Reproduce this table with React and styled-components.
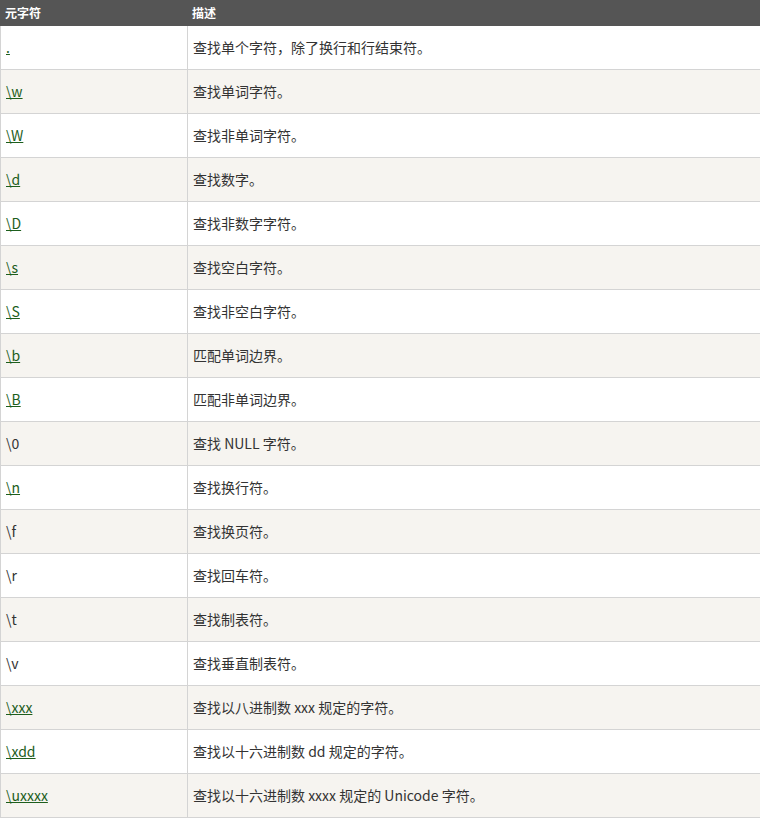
import React from "react";
import styled, { createGlobalStyle } from "styled-components";

const Global = createGlobalStyle`
  html, body { margin: 0; padding: 0; background: #fff; overflow: hidden; }
  body { font-family: "Noto Sans CJK SC", "Liberation Sans", sans-serif; }
`;

const Table = styled.table`
  border-collapse: collapse;
  table-layout: fixed;
  width: 762px;
  font-family: "Noto Sans CJK SC", "Liberation Sans", sans-serif;
  font-size: 14px;
  color: #333;
`;

const Th = styled.th`
  background: #555;
  color: #fff;
  font-size: 12px;
  font-weight: bold;
  text-align: left;
  vertical-align: top;
  padding: 3px 4px;
  line-height: 18px;
  border: 1px solid #555;
  height: 18px;
  box-sizing: content-box;
`;

const Row = styled.tr`
  background: ${(p) => (p.$alt ? "#f6f4f0" : "#fff")};
`;

const Td = styled.td`
  border: 1px solid #d4d4d4;
  padding: 7px 5px 8px;
  line-height: 28px;
  vertical-align: top;
`;

const Link = styled.a`
  color: #1d5e1d;
  text-decoration: underline;
`;

const rows = [
  [".", "查找单个字符，除了换行和行结束符。", true],
  ["\\w", "查找单词字符。", true],
  ["\\W", "查找非单词字符。", true],
  ["\\d", "查找数字。", true],
  ["\\D", "查找非数字字符。", true],
  ["\\s", "查找空白字符。", true],
  ["\\S", "查找非空白字符。", true],
  ["\\b", "匹配单词边界。", true],
  ["\\B", "匹配非单词边界。", true],
  ["\\0", "查找 NULL 字符。", false],
  ["\\n", "查找换行符。", true],
  ["\\f", "查找换页符。", false],
  ["\\r", "查找回车符。", false],
  ["\\t", "查找制表符。", false],
  ["\\v", "查找垂直制表符。", false],
  ["\\xxx", "查找以八进制数 xxx 规定的字符。", true],
  ["\\xdd", "查找以十六进制数 dd 规定的字符。", true],
  ["\\uxxxx", "查找以十六进制数 xxxx 规定的 Unicode 字符。", true],
];

export default function App() {
  return (
    <>
      <Global />
      <Table>
        <colgroup>
          <col style={{ width: 187 }} />
          <col />
        </colgroup>
        <thead>
          <tr>
            <Th>元字符</Th>
            <Th>描述</Th>
          </tr>
        </thead>
        <tbody>
          {rows.map(([m, d, link], i) => (
            <Row key={i} $alt={i % 2 === 1}>
              <Td>{link ? <Link href="#">{m}</Link> : m}</Td>
              <Td>{d}</Td>
            </Row>
          ))}
        </tbody>
      </Table>
    </>
  );
}
